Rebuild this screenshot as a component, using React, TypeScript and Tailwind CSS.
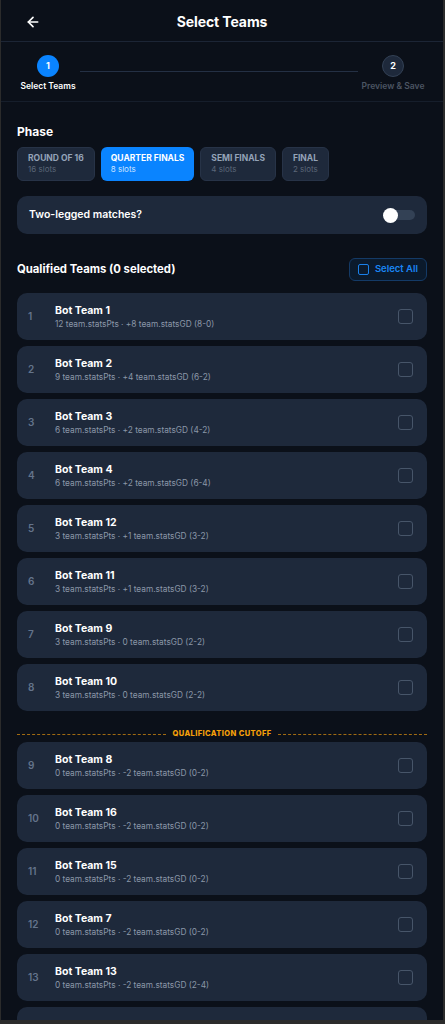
import { ArrowLeft } from 'lucide-react';

interface Team {
  rank: number;
  name: string;
  pts: number;
  gd: string;
  record: string;
}

const teams: Team[] = [
  { rank: 1, name: 'Bot Team 1', pts: 12, gd: '+8', record: '8-0' },
  { rank: 2, name: 'Bot Team 2', pts: 9, gd: '+4', record: '6-2' },
  { rank: 3, name: 'Bot Team 3', pts: 6, gd: '+2', record: '4-2' },
  { rank: 4, name: 'Bot Team 4', pts: 6, gd: '+2', record: '6-4' },
  { rank: 5, name: 'Bot Team 12', pts: 3, gd: '+1', record: '3-2' },
  { rank: 6, name: 'Bot Team 11', pts: 3, gd: '+1', record: '3-2' },
  { rank: 7, name: 'Bot Team 9', pts: 3, gd: '0', record: '2-2' },
  { rank: 8, name: 'Bot Team 10', pts: 3, gd: '0', record: '2-2' },
  { rank: 9, name: 'Bot Team 8', pts: 0, gd: '-2', record: '0-2' },
  { rank: 10, name: 'Bot Team 16', pts: 0, gd: '-2', record: '0-2' },
  { rank: 11, name: 'Bot Team 15', pts: 0, gd: '-2', record: '0-2' },
  { rank: 12, name: 'Bot Team 7', pts: 0, gd: '-2', record: '0-2' },
  { rank: 13, name: 'Bot Team 13', pts: 0, gd: '-2', record: '2-4' },
  { rank: 14, name: 'Bot Team 14', pts: 0, gd: '-2', record: '0-2' },
];

const phases = [
  { label: 'ROUND OF 16', slots: '16 slots' },
  { label: 'QUARTER FINALS', slots: '8 slots', active: true },
  { label: 'SEMI FINALS', slots: '4 slots' },
  { label: 'FINAL', slots: '2 slots' },
];

function TeamRow({ team }: { team: Team }) {
  return (
    <div className="flex items-center h-[47px] rounded-[10px] bg-[#1e293b] pl-[11px] pr-[14px] mb-[6px]">
      <span className="w-[27px] text-[10px] font-semibold text-[#64748b]">{team.rank}</span>
      <div className="flex-1 min-w-0">
        <div className="text-[10.5px] font-bold text-white leading-[14px]">{team.name}</div>
        <div className="text-[8.3px] text-[#8b97a8] leading-[12px]">
          {team.pts} team.statsPts · {team.gd} team.statsGD ({team.record})
        </div>
      </div>
      <div className="w-[15px] h-[15px] rounded-[3px] border-[1.5px] border-[#475569]" />
    </div>
  );
}

export default function App() {
  return (
    <div className="h-[1024px] overflow-hidden bg-[#2b2b2b] pl-px pr-[2px] pb-[4px]" style={{ fontFamily: 'Inter, "Noto Sans", sans-serif' }}>
      <div className="h-full overflow-hidden bg-[#0b1019]">
        {/* Header */}
        <div className="relative flex items-center justify-center h-[42px] pt-[2px] border-b border-[#1c2535]">
          <ArrowLeft className="absolute left-[24px] top-[14px] text-white" size={16} strokeWidth={2.5} />
          <h1 className="text-[14px] font-bold tracking-[-0.1px] text-white">Select Teams</h1>
        </div>

        {/* Stepper */}
        <div className="flex items-start h-[60px] border-b border-[#161e2b] px-[18px] pt-[13px]">
          <div className="flex flex-col items-center w-[58px]">
            <div className="w-[22px] h-[22px] rounded-full bg-[#0a84ff] flex items-center justify-center text-[9px] font-bold text-white">1</div>
            <span className="mt-[3px] text-[8.5px] font-semibold text-white">Select Teams</span>
          </div>
          <div className="flex-1 h-px bg-[#243044] mt-[16px] mx-[3px]" />
          <div className="flex flex-col items-center w-[64px]">
            <div className="w-[22px] h-[22px] rounded-full bg-[#1e293b] border border-[#334155] flex items-center justify-center text-[9px] font-bold text-white">2</div>
            <span className="mt-[3px] text-[8.5px] font-semibold text-[#4b5563]">Preview &amp; Save</span>
          </div>
        </div>

        <div className="px-[16px]">
          {/* Phase */}
          <div className="pt-[22px] text-[12px] font-bold text-white leading-[16px]">Phase</div>
          <div className="flex gap-[6px] mt-[7px]">
            {phases.map((p) =>
              p.active ? (
                <div key={p.label} className="h-[34px] rounded-[6px] bg-[#0a84ff] px-[10px] flex flex-col justify-center">
                  <span className="text-[8.5px] font-bold text-white leading-[11px]">{p.label}</span>
                  <span className="text-[8px] text-[#cfe5ff] leading-[11px]">{p.slots}</span>
                </div>
              ) : (
                <div key={p.label} className="h-[34px] rounded-[6px] bg-[#1e293b] border border-[#273347] px-[10px] flex flex-col justify-center">
                  <span className="text-[8.5px] font-bold text-[#94a3b8] leading-[11px]">{p.label}</span>
                  <span className="text-[8px] text-[#5b6678] leading-[11px]">{p.slots}</span>
                </div>
              )
            )}
          </div>

          {/* Two-legged */}
          <div className="mt-[15px] h-[38px] rounded-[10px] bg-[#1e293b] flex items-center justify-between pl-[12px] pr-[12px]">
            <span className="text-[10.5px] font-semibold text-white">Two-legged matches?</span>
            <div className="relative w-[30px] h-[10px] rounded-full bg-[#334155]">
              <div className="absolute left-[-2px] top-[-2px] w-[15px] h-[15px] rounded-full bg-white" />
            </div>
          </div>

          {/* Qualified header */}
          <div className="flex items-center justify-between mt-[24px] mb-[12px]">
            <span className="text-[11.3px] font-bold text-white">Qualified Teams (0 selected)</span>
            <div className="flex items-center gap-[6px] h-[23px] pl-[8px] pr-[8px] rounded-[6px] border border-[#143a66] bg-[#0b1a2c]">
              <div className="w-[11px] h-[11px] rounded-[2px] border-[1.5px] border-[#1a7fe8]" />
              <span className="text-[9.5px] font-semibold text-[#1a86f5]">Select All</span>
            </div>
          </div>

          {/* Teams */}
          <div>
            {teams.slice(0, 8).map((t) => (
              <TeamRow key={t.rank} team={t} />
            ))}
            <div className="flex items-center gap-[6px] h-[12px] mt-[17px] mb-[2px]">
              <div className="flex-1 border-t border-dashed border-[#a16b12]" />
              <span className="text-[7.5px] font-extrabold tracking-[0.4px] text-[#f5a00a]">QUALIFICATION CUTOFF</span>
              <div className="flex-1 border-t border-dashed border-[#a16b12]" />
            </div>
            {teams.slice(8).map((t) => (
              <TeamRow key={t.rank} team={t} />
            ))}
          </div>
        </div>
      </div>
    </div>
  );
}
